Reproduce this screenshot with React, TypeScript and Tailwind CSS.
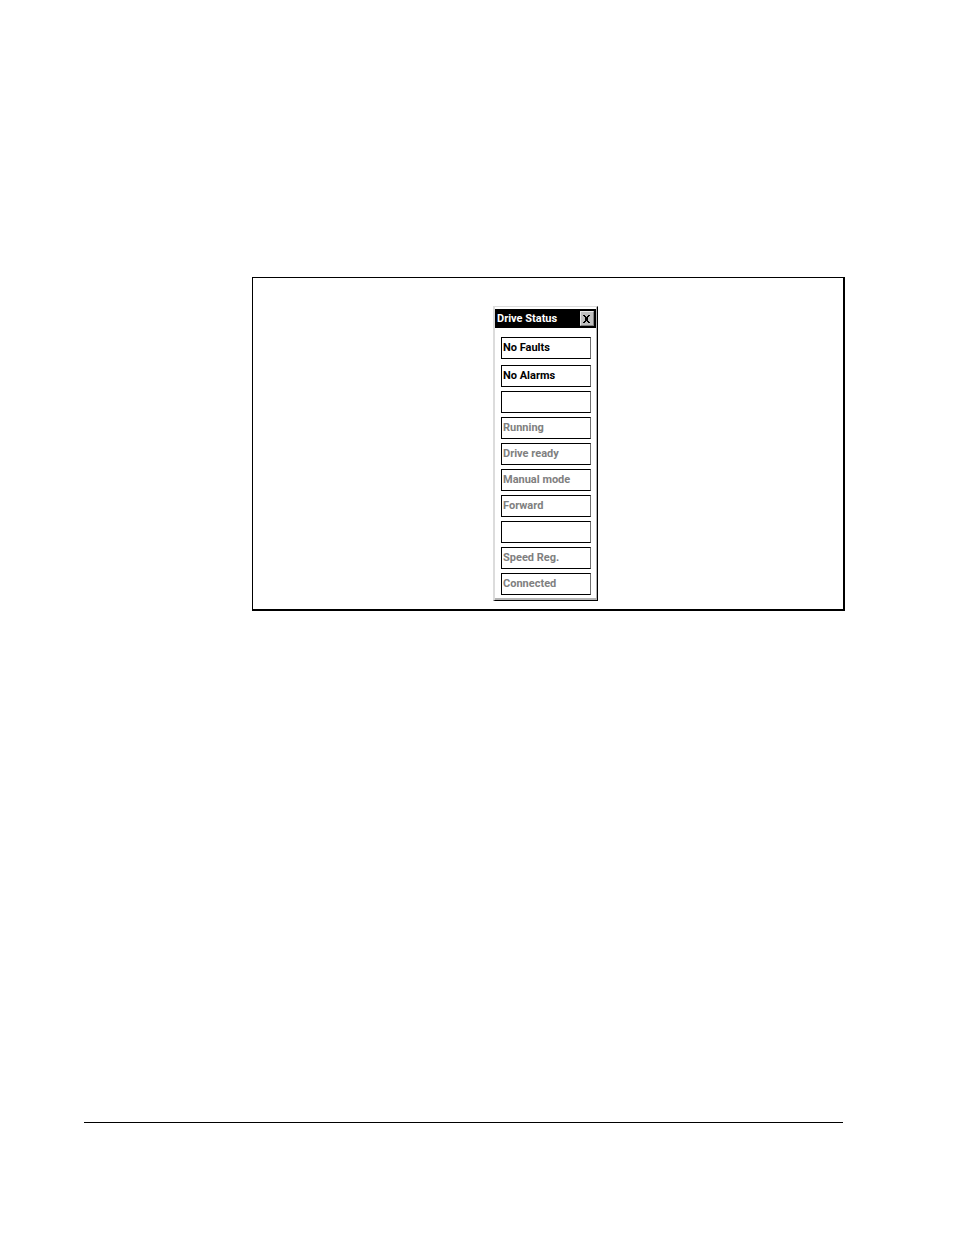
interface StatusItem {
  id: string;
  label: string;
  active: boolean;
}

const messages: StatusItem[] = [
  { id: 'faults', label: 'No Faults', active: true },
  { id: 'alarms', label: 'No Alarms', active: true },
];

const states: StatusItem[] = [
  { id: 'blank-1', label: '', active: false },
  { id: 'running', label: 'Running', active: false },
  { id: 'ready', label: 'Drive ready', active: false },
  { id: 'mode', label: 'Manual mode', active: false },
  { id: 'direction', label: 'Forward', active: false },
  { id: 'blank-2', label: '', active: false },
  { id: 'regulation', label: 'Speed Reg.', active: false },
  { id: 'connection', label: 'Connected', active: false },
];

function StatusRow({ item }: { item: StatusItem }) {
  return (
    <li
      className={`h-[22px] border border-black border-r-[#707070] pl-px leading-5 ${
        item.active ? 'text-black' : 'text-[#808080]'
      }`}
    >
      {item.label}
    </li>
  );
}

function DriveStatusWindow() {
  return (
    <section
      aria-label="Drive Status"
      className="w-[105px] border-t border-r border-b border-l-2 border-t-[#dcdcdc] border-l-[#dcdcdc] border-r-black border-b-black bg-white pt-[2px] shadow-[inset_-1px_-2px_0_#b4b4b4] font-[Roboto,'Liberation_Sans',sans-serif] text-[11px] font-bold"
    >
      <header className="mr-px flex h-[19px] items-center justify-between bg-black pr-[2px] pl-[2px]">
        <h1 className="leading-5 text-white">Drive Status</h1>
        <button
          type="button"
          aria-label="Close"
          className="flex h-[15px] w-[14px] items-center justify-center border border-t-[#e8e8e8] border-l-[#e8e8e8] border-r-[#808080] border-b-[#808080] bg-[#c0c0c0]"
        >
          <svg width="8" height="8" viewBox="0 0 8 8" shapeRendering="crispEdges">
            <path
              d="M0 0h2v1h-2zM5 0h2v1h-2zM1 1h2v1h-2zM4 1h2v1h-2zM2 2h3v4h-3zM1 6h2v1h-2zM4 6h2v1h-2zM0 7h2v1h-2zM5 7h2v1h-2z"
              fill="black"
            />
          </svg>
        </button>
      </header>

      <div className="flex flex-col gap-[6px] pt-[9px] pr-[6px] pb-[5px] pl-[6px]">
        <ul>
          <StatusRow item={messages[0]} />
        </ul>
        <ul className="flex flex-col gap-1">
          {[messages[1], ...states].map((item) => (
            <StatusRow key={item.id} item={item} />
          ))}
        </ul>
      </div>
    </section>
  );
}

export default function App() {
  return (
    <main className="flex min-h-screen flex-col bg-white pt-[277px] pr-[109px] pb-28 pl-[84px]">
      <figure className="ml-[168px] flex justify-center border-t border-r-2 border-b-2 border-l border-black pt-7 pr-[5px] pb-2">
        <DriveStatusWindow />
      </figure>
      <hr className="mt-auto mr-[2px] border-t border-black" />
    </main>
  );
}
